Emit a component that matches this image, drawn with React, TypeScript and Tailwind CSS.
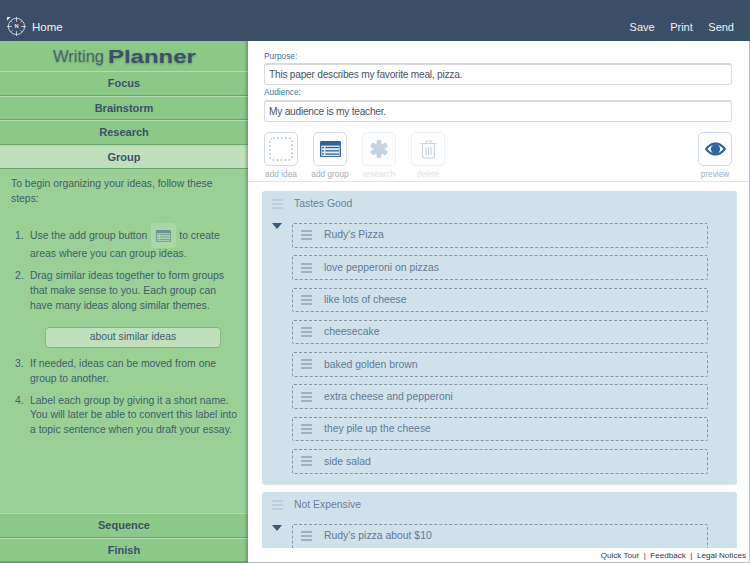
const topSteps = ["Focus", "Brainstorm", "Research"];
const bottomSteps = ["Sequence", "Finish"];
const tastesGood = [
  "Rudy's Pizza",
  "love pepperoni on pizzas",
  "like lots of cheese",
  "cheesecake",
  "baked golden brown",
  "extra cheese and pepperoni",
  "they pile up the cheese",
  "side salad",
];

function Handle({ light }: { light?: boolean }) {
  const bar = light ? "h-[2px] bg-[#bccfdb]" : "h-[2px] bg-[#9db3c5]";
  return (
    <div className="flex flex-col gap-[2px] w-[11px] shrink-0">
      <div className={bar} />
      <div className={bar} />
      <div className={bar} />
    </div>
  );
}

function Step({ name, active }: { name: string; active?: boolean }) {
  return (
    <div
      className={`h-[24.5px] flex items-center justify-center text-[11px] font-bold text-[#3b5168] border-t border-t-[#b5dcb0] border-b border-b-[#66a868] ${
        active ? "bg-[#bfe0ba]" : "bg-[#8cc887]"
      }`}
    >
      {name}
    </div>
  );
}

function Idea({ text }: { text: string }) {
  return (
    <div className="h-[24.5px] flex items-center ml-[30px] mr-[29px] mb-[7.8px] border border-dashed border-[#8598aa] rounded-[2px] pl-[8px]">
      <Handle />
      <span className="ml-[12px] text-[10.4px] text-[#5f7b98]">{text}</span>
    </div>
  );
}

function Tool({ label, faded, children }: { label: string; faded?: boolean; children: React.ReactNode }) {
  return (
    <div className="flex flex-col items-center w-[34px]">
      <div
        className={`w-[34px] h-[34px] rounded-[5px] border flex items-center justify-center ${
          faded ? "border-[#edf2f5]" : "border-[#cfdbe6]"
        }`}
      >
        {children}
      </div>
      <span className={`mt-[3px] text-[8.3px] leading-[10px] whitespace-nowrap ${faded ? "text-[#dbe3ea]" : "text-[#9fb0c0]"}`}>{label}</span>
    </div>
  );
}

function GroupIcon({ color, stripe, size }: { color: string; stripe: string; size: number }) {
  return (
    <svg width={size} height={size * 0.78} viewBox="0 0 32 25">
      <rect width="32" height="25" rx="2" fill={color} />
      <rect x="2" y="7" width="28" height="16" fill={stripe} />
      <rect x="3" y="9" width="3" height="2" fill={color} />
      <rect x="8" y="9" width="21" height="2" fill={color} />
      <rect x="3" y="14" width="3" height="2" fill={color} />
      <rect x="8" y="14" width="21" height="2" fill={color} />
      <rect x="3" y="19" width="3" height="2" fill={color} />
      <rect x="8" y="19" width="21" height="2" fill={color} />
    </svg>
  );
}

export default function App() {
  return (
    <div className="w-[750px] h-[563px] overflow-hidden flex flex-col bg-white font-['Liberation_Sans',Arial,sans-serif]">
      {/* Top bar */}
      <header className="h-[41px] shrink-0 bg-[#3a4e66] flex items-end pb-[7px] pl-[6px] pr-[16px] text-[#eef2f5] text-[11.5px] leading-[14px]">
        <svg width="20" height="20" viewBox="0 0 21 21" fill="none" stroke="#dfe6ea" strokeWidth="0.9" className="mb-[-2px]">
          <circle cx="11" cy="11" r="8.5" />
          <path d="M11 1v5M11 16v5M1 11h5M16 11h5" />
          <path d="M5 5l2 2M17 5l-2 2M5 17l2-2M17 17l-2-2" strokeWidth="0.6" />
          <path d="M1 1h4L1 5z" fill="#dfe6ea" stroke="none" />
          <text x="11" y="13" fontSize="6" fontWeight="700" textAnchor="middle" fill="#dfe6ea" stroke="none">N</text>
        </svg>
        <span className="ml-[6px]">Home</span>
        <div className="ml-auto flex gap-[15.5px] text-[11px]">
          <span>Save</span>
          <span>Print</span>
          <span>Send</span>
        </div>
      </header>

      <div className="flex flex-1 min-h-0">
        {/* Steps sidebar */}
        <aside className="relative w-[248px] shrink-0 flex flex-col bg-[#9ad096] border-b border-b-[#5fa35f]">
          <div className="h-[30px] bg-[#8cc887] flex items-center pl-[53px] text-[#3b5168]">
            <span className="w-[55px] text-[16.5px] font-light text-[#4d6373] [text-shadow:0_1px_2px_rgba(40,70,50,0.3)]">Writing</span>
            <span className="text-[19px] leading-none font-bold [text-shadow:0_1px_2px_rgba(40,70,50,0.4)] scale-x-[1.26] origin-left">Planner</span>
          </div>
          {topSteps.map((s) => (
            <Step key={s} name={s} />
          ))}
          <Step name="Group" active />

          <div className="flex-1 pt-[8px] pl-[11px] pr-[10px] text-[10.4px] leading-[14.7px] text-[#41606a]">
            <p>To begin organizing your ideas, follow these steps:</p>
            <ol className="mt-[17px]">
              <li className="flex">
                <span className="w-[19px] pl-[4px] shrink-0 leading-[25px]">1.</span>
                <div>
                  <div className="h-[25px] flex items-center">
                    Use the add group button
                    <span className="ml-[4px] mr-[3px] w-[25px] h-[25px] rounded-[4px] bg-[#a9d8a6] inline-flex items-center justify-center">
                      <GroupIcon color="#6a9690" stripe="#b4dab2" size={15} />
                    </span>
                    to create
                  </div>
                  <div className="-mt-[1px]">areas where you can group ideas.</div>
                </div>
              </li>
              <li className="flex mt-[7px]">
                <span className="w-[19px] pl-[4px] shrink-0">2.</span>
                <span>Drag similar ideas together to form groups that make sense to you. Each group can have many ideas along similar themes.</span>
              </li>
            </ol>
            <button className="block mt-[14px] ml-[34px] w-[176px] h-[21px] rounded-[4px] border border-[#7fb67f] bg-[#bfe0ba] text-[10.4px] text-[#41606a]">
              about similar ideas
            </button>
            <ol className="mt-[9px]">
              <li className="flex">
                <span className="w-[19px] pl-[4px] shrink-0">3.</span>
                <span>If needed, ideas can be moved from one group to another.</span>
              </li>
              <li className="flex mt-[7px]">
                <span className="w-[19px] pl-[4px] shrink-0">4.</span>
                <span>Label each group by giving it a short name. You will later be able to convert this label into a topic sentence when you draft your essay.</span>
              </li>
            </ol>
          </div>

          {bottomSteps.map((s) => (
            <Step key={s} name={s} />
          ))}
          <div className="pointer-events-none absolute top-0 bottom-0 right-0 w-[4px] bg-gradient-to-r from-transparent to-[rgba(50,90,60,0.4)]" />
        </aside>

        {/* Main panel */}
        <main className="flex-1 min-w-0 flex flex-col border-r border-r-[#b9bdc6] border-b border-b-[#b9bdc6]">
          <div className="h-[141px] shrink-0 border-b border-b-[#dbe5ec] pt-[10px] pl-[16px] pr-[17px]">
            <label className="block text-[8.3px] leading-[10px] text-[#3f7396]">Purpose:</label>
            <div className="mt-[2px] h-[22px] flex items-center rounded-[3px] border border-[#dadada] border-t-2 pl-[4px] text-[10.2px] tracking-[-0.25px] text-[#4a5563]">
              This paper describes my favorite meal, pizza.
            </div>
            <label className="block mt-[2px] text-[8.3px] leading-[10px] text-[#3f7396]">Audience:</label>
            <div className="mt-[3px] h-[22px] flex items-center rounded-[3px] border border-[#dadada] border-t-2 pl-[4px] text-[10.2px] tracking-[-0.25px] text-[#4a5563]">
              My audience is my teacher.
            </div>
            <div className="mt-[10px] flex">
              <div className="flex gap-[15px]">
                <Tool label="add idea">
                  <svg width="24" height="24" viewBox="0 0 24 24" fill="none">
                    <rect x="1" y="1" width="22" height="22" rx="3" stroke="#8296a8" strokeWidth="1" strokeDasharray="1.5 2.5" />
                  </svg>
                </Tool>
                <Tool label="add group">
                  <GroupIcon color="#2e659b" stripe="#e6eef4" size={21} />
                </Tool>
                <Tool label="research" faded>
                  <svg width="18" height="18" viewBox="0 0 18 18" fill="#c3d3e1">
                    <rect x="6.5" y="0" width="5" height="18" rx="1.5" />
                    <rect x="6.5" y="0" width="5" height="18" rx="1.5" transform="rotate(60 9 9)" />
                    <rect x="6.5" y="0" width="5" height="18" rx="1.5" transform="rotate(120 9 9)" />
                  </svg>
                </Tool>
                <Tool label="delete" faded>
                  <svg width="17" height="19" viewBox="0 0 17 19" fill="none" stroke="#c9d6e2" strokeWidth="1.2">
                    <path d="M0.5 3.5h16M6 3.5V1h5v2.5" />
                    <path d="M2.5 3.5V16a2 2 0 0 0 2 2h8a2 2 0 0 0 2-2V3.5" />
                    <path d="M6 7v8M8.5 7v8M11 7v8" />
                  </svg>
                </Tool>
              </div>
              <div className="ml-auto">
                <Tool label="preview">
                  <svg width="23" height="14" viewBox="0 0 24 15">
                    <path d="M0.5 7.5C4 2.5 8 0.5 12 0.5s8 2 11.5 7C20 12.5 16 14.5 12 14.5S4 12.5 0.5 7.5z" fill="#2e659b" />
                    <path d="M3.5 7.5C6 4.5 9 3 12 3s6 1.5 8.5 4.5C18 10.5 15 12 12 12s-6-1.5-8.5-4.5z" fill="#fff" />
                    <circle cx="12" cy="7.5" r="5" fill="#2e659b" />
                  </svg>
                </Tool>
              </div>
            </div>
          </div>

          <div className="flex-1 min-h-0 overflow-hidden pt-[9px] pl-[14px] pr-[12px]">
            <section className="h-[294px] bg-[#cfe1eb] rounded-[3px] relative">
              <div className="h-[25px] mb-[7px] flex items-center pl-[10px]">
                <Handle light />
                <span className="ml-[11px] text-[10.4px] text-[#68829c]">Tastes Good</span>
              </div>
              <div className="absolute left-[10px] top-[32px] w-0 h-0 border-l-[5.5px] border-r-[5.5px] border-t-[6px] border-l-transparent border-r-transparent border-t-[#3a5a7c]" />
              {tastesGood.map((t) => (
                <Idea key={t} text={t} />
              ))}
            </section>
            <section className="mt-[7px] h-[100px] bg-[#cfe1eb] rounded-[3px] relative">
              <div className="h-[25px] mb-[7px] flex items-center pl-[10px]">
                <Handle light />
                <span className="ml-[11px] text-[10.4px] text-[#68829c]">Not Expensive</span>
              </div>
              <div className="absolute left-[10px] top-[33px] w-0 h-0 border-l-[5.5px] border-r-[5.5px] border-t-[6px] border-l-transparent border-r-transparent border-t-[#3a5a7c]" />
              <Idea text="Rudy's pizza about $10" />
            </section>
          </div>

          <footer className="h-[14px] shrink-0 bg-white flex items-center justify-end pt-[2px] pr-[3px] text-[8.1px] leading-[10px] text-[#33383f]">
            Quick Tour&nbsp;&nbsp;|&nbsp;&nbsp;Feedback&nbsp;&nbsp;|&nbsp;&nbsp;Legal Notices
          </footer>
        </main>
      </div>
    </div>
  );
}
